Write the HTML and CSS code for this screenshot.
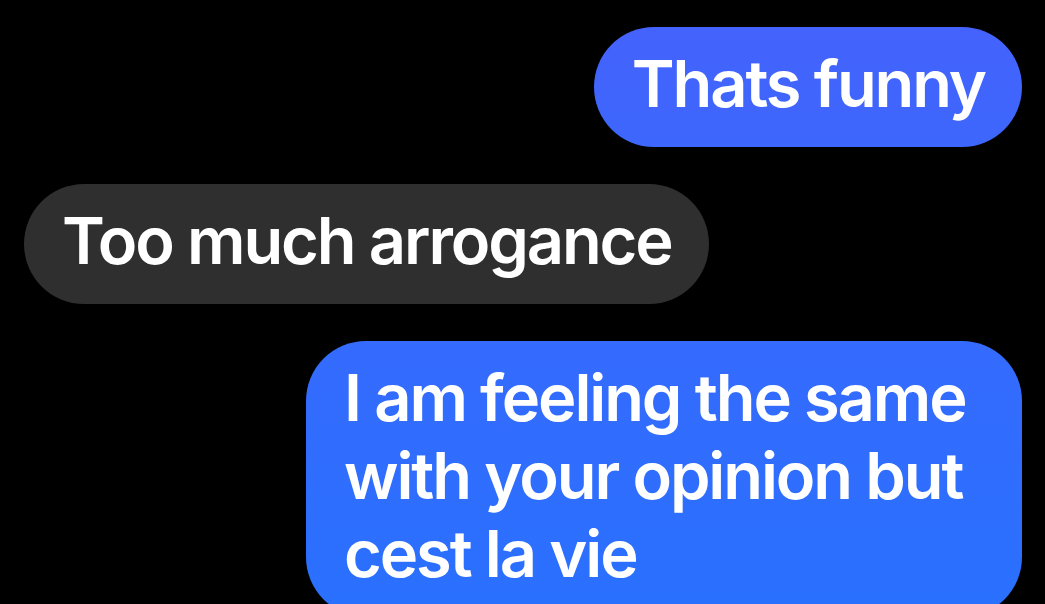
FILE: index.html
```html
<!DOCTYPE html>
<html lang="en">
<head>
    <meta charset="UTF-8">
    <meta name="viewport" content="width=device-width, initial-scale=1.0">
    <title>Messages</title>
    <link rel="stylesheet" href="styles.css">
</head>
<body>
    <div class="thread">
        <div class="bubble sent">Thats funny</div>
        <div class="bubble received">Too much arrogance</div>
        <div class="bubble sent">I am feeling the same with your opinion but cest la vie</div>
    </div>
</body>
</html>
```

FILE: styles.css
```css
body {
    margin: 0;
    background: #000;
    font-family: Inter, "Noto Sans", sans-serif;
    overflow: hidden;
}
.thread {
    display: flex;
    flex-direction: column;
    gap: 37px;
    padding: 27px 23px 0 24px;
}
.bubble {
    box-sizing: border-box;
    max-width: 716px;
    padding: 18px 37px 24px 38px;
    border-radius: 60px;
    color: #fff;
    font-size: 65px;
    font-weight: 600;
    letter-spacing: -2.1px;
    line-height: 78px;
}
.sent {
    align-self: flex-end;
    background: linear-gradient(180deg, #4562fc 0px, #3a68fd 200px, #2a70fe 604px);
    background-attachment: fixed;
}
.received {
    align-self: flex-start;
    background: #2f2f2f;
}
```
